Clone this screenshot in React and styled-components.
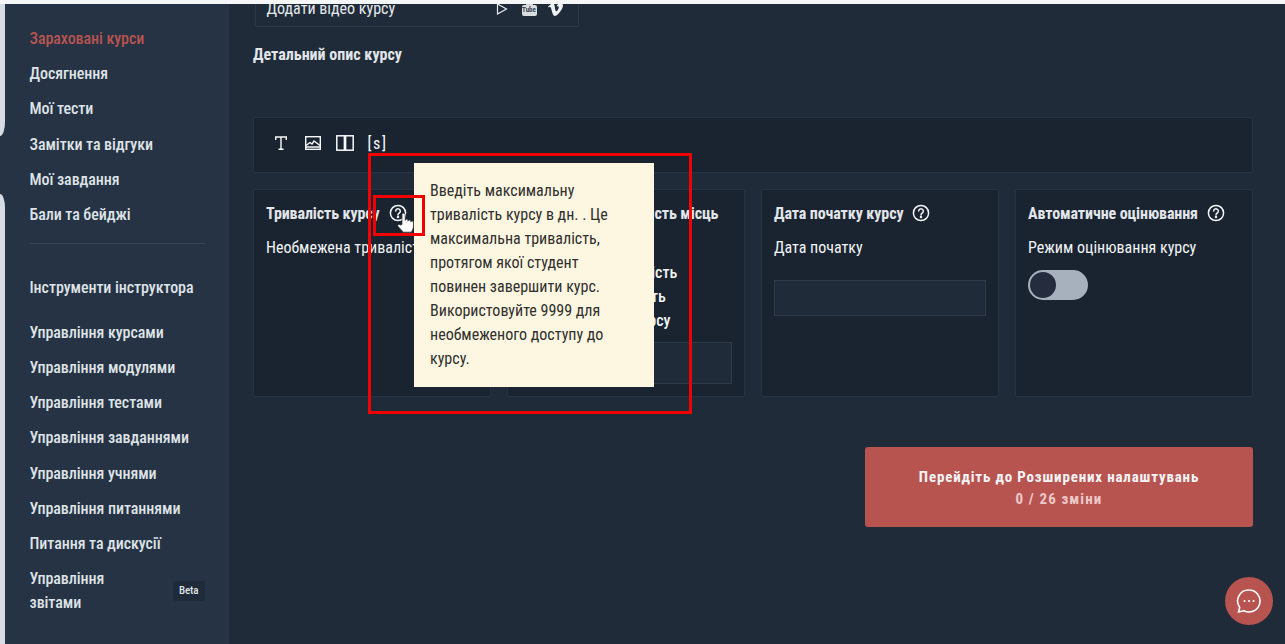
import React from 'react';
import styled, { createGlobalStyle } from 'styled-components';
import { FaVimeoV } from 'react-icons/fa';

const FONT = '"Roboto Condensed", Roboto, "Liberation Sans Narrow", "Liberation Sans", sans-serif';

const GlobalStyle = createGlobalStyle`
  html, body {
    margin: 0;
    padding: 0;
    height: 100%;
    overflow: hidden;
    background: #1f2b39;
  }
  * {
    box-sizing: border-box;
  }
`;

const Page = styled.div`
  display: flex;
  flex-direction: column;
  height: 644px;
  font-family: ${FONT};
  font-stretch: 75%;
  color: #f2f4f6;
`;

const TopStrip = styled.div`
  flex: 0 0 4px;
  background: #f4f6f8;
`;

const Body = styled.div`
  flex: 1;
  display: flex;
  min-height: 0;
`;

const EdgeStrip = styled.div`
  flex: 0 0 5px;
  display: flex;
  flex-direction: column;
  background: #263344;
`;

const EdgePiece = styled.div`
  background: #d5dce3;
  height: ${props => props.$h}px;
  flex: ${props => (props.$grow ? 1 : 'none')};
  margin-bottom: ${props => props.$gap || 0}px;
  border-radius: ${props => props.$radius || '0'};
`;

const Sidebar = styled.nav`
  flex: 0 0 223px;
  background: #263344;
  padding: 17px 24px 0 24.5px;
`;

const SideList = styled.div`
  display: flex;
  flex-direction: column;
`;

const SideItem = styled.div`
  display: flex;
  align-items: center;
  justify-content: space-between;
  height: ${props => props.$h || 35.2}px;
  font-size: 16px;
  font-weight: 500;
  letter-spacing: -0.07px;
  color: ${props => (props.$active ? '#b85450' : '#dfe3e7')};
`;

const TwoLine = styled.span`
  line-height: 24px;
  width: 90px;
`;

const BetaTag = styled.span`
  background: #1f2b39;
  border-radius: 3px;
  font-size: 11px;
  line-height: 20px;
  padding: 0 6px;
  color: #dfe3e7;
`;

const Divider = styled.div`
  height: 1px;
  background: #364558;
  margin: 11px 0 29px;
  width: 175px;
`;

const SideHeading = styled(SideItem)`
  height: 28px;
  margin-bottom: 13.7px;
`;

const LastItem = styled(SideItem)`
  margin-top: 0.3px;
`;

const Main = styled.main`
  position: relative;
  flex: 1;
  padding: 0 32px 0 24px;
  min-width: 0;
`;

const VideoBox = styled.div`
  width: 324px;
  height: 23px;
  margin-left: 2px;
  overflow: hidden;
  border: 1px solid #2a3848;
  border-top: 0;
  border-radius: 0 0 2px 2px;
  display: flex;
  align-items: flex-end;
  justify-content: space-between;
  padding: 0 14px 8px 11px;
  font-size: 16px;
  line-height: 18px;
  color: #e6e9ec;
`;

const VideoIcons = styled.div`
  display: flex;
  align-items: center;
  gap: 12px;
  height: 18px;
`;

const TubeBadge = styled.span`
  position: relative;
  width: 15px;
  height: 11px;
  margin: 3px -2px 0 2px;
  border-radius: 2px;
  background: #d9dde1;
  color: #3a4654;
  font-size: 7px;
  line-height: 11px;
  font-weight: 700;
  text-align: center;
  &::before {
    content: '';
    position: absolute;
    left: 4px;
    top: -3px;
    width: 7px;
    height: 3px;
    background: #c9ced4;
  }
`;

const SectionTitle = styled.h2`
  margin: 18px 0 0 0.5px;
  font-size: 16px;
  line-height: 20px;
  font-weight: 700;
  color: #e2e6ea;
`;

const Toolbar = styled.div`
  margin-top: 52px;
  height: 56px;
  display: flex;
  align-items: center;
  gap: 14px;
  padding: 0 18px 4px;
  background: #1a2430;
  border: 1px solid #263344;
  border-radius: 2px;
`;

const ToolGlyph = styled.span`
  font-size: 16px;
  font-weight: 400;
  letter-spacing: 1.6px;
  color: #f8f9fa;
`;

const Cards = styled.div`
  margin-top: 16px;
  display: grid;
  grid-template-columns: repeat(4, 238px);
  gap: 16px;
`;

const Card = styled.section`
  height: 208px;
  padding: 13px 12px;
  background: #1a2430;
  border: 1px solid #263344;
  border-radius: 2px;
`;

const CardHead = styled.div`
  display: flex;
  flex-wrap: wrap;
  align-items: center;
  column-gap: 9px;
  min-height: 20px;
  margin-top: 1px;
  padding-left: 0.5px;
  font-size: 16px;
  line-height: 20px;
  font-weight: 700;
  letter-spacing: -0.1px;
  color: #e2e6ea;
  white-space: nowrap;
`;

const HelpGlyph = styled.svg`
  margin-top: -3px;
`;

const CardLabel = styled.div`
  margin-top: 14px;
  padding-left: 0.5px;
  font-size: 16px;
  line-height: 20px;
  color: #f2f4f6;
  white-space: nowrap;
`;

const FieldBox = styled.div`
  margin-top: ${props => props.$mt || 22}px;
  height: ${props => props.$h || 36}px;
  background: #1f2b39;
  border: 1px solid #2c3a4a;
`;

const StackLabel = styled.div`
  margin-top: 22px;
  font-size: 16px;
  line-height: 24px;
  font-weight: 500;
  white-space: nowrap;
`;

const Toggle = styled.div`
  margin-top: 12px;
  width: 60px;
  height: 30px;
  border-radius: 15px;
  background: #a7b0bd;
  padding: 2px;
`;

const ToggleKnob = styled.div`
  width: 26px;
  height: 26px;
  border-radius: 50%;
  background: #252c3e;
`;

const Tooltip = styled.div`
  position: absolute;
  left: 185px;
  top: 159px;
  width: 240px;
  height: 224px;
  padding: 16px 16px 16px 16.5px;
  background: #fdf6e0;
  color: #30302e;
  font-size: 16px;
  line-height: 24px;
`;

const Highlight = styled.div`
  position: absolute;
  border: 3px solid #f00000;
  pointer-events: none;
  left: ${props => props.$l}px;
  top: ${props => props.$t}px;
  width: ${props => props.$w}px;
  height: ${props => props.$h}px;
`;

const Cursor = styled.svg`
  position: absolute;
  left: 168px;
  top: 208px;
`;

const Footer = styled.div`
  display: flex;
  justify-content: flex-end;
  margin-top: 50px;
`;

const NextButton = styled.div`
  width: 388px;
  height: 80px;
  padding-top: 2px;
  background: #b85450;
  border-radius: 3px;
  display: flex;
  flex-direction: column;
  align-items: center;
  justify-content: center;
  gap: 2px;
  font-size: 15px;
  line-height: 20px;
  font-weight: 700;
  letter-spacing: 0.82px;
`;

const ButtonSub = styled.span`
  color: #ecc9c8;
  letter-spacing: 1.1px;
`;

const ChatBubble = styled.div`
  position: absolute;
  right: 12px;
  bottom: 19px;
  width: 48px;
  height: 48px;
  border-radius: 50%;
  background: #b85450;
  display: flex;
  align-items: center;
  justify-content: center;
`;

const HelpIcon = () => (
  <HelpGlyph width="18" height="18" viewBox="0 0 18 18" fill="none" stroke="#f2f4f6" strokeWidth="1.5">
    <circle cx="9" cy="9" r="7.6" />
    <path d="M6.7 7.1a2.3 2.3 0 1 1 3.6 1.9c-.8.5-1.3 1-1.3 1.9" strokeLinecap="round" />
    <circle cx="9" cy="13" r=".5" fill="#f2f4f6" />
  </HelpGlyph>
);

const studentItems = ['Зараховані курси', 'Досягнення', 'Мої тести', 'Замітки та відгуки', 'Мої завдання', 'Бали та бейджі'];
const instructorItems = ['Управління курсами', 'Управління модулями', 'Управління тестами', 'Управління завданнями', 'Управління учнями', 'Управління питаннями', 'Питання та дискусії'];

export default function App() {
  return (
    <Page>
      <GlobalStyle />
      <TopStrip />
      <Body>
        <EdgeStrip>
          <EdgePiece $h={132} $radius="0 0 5px 0 / 0 0 14px 0" $gap={58} />
          <EdgePiece $grow $radius="0 5px 0 0 / 0 14px 0 0" />
        </EdgeStrip>
        <Sidebar>
          <SideList>
            {studentItems.map((item, i) => (
              <SideItem key={item} $active={i === 0}>{item}</SideItem>
            ))}
            <Divider />
            <SideHeading>Інструменти інструктора</SideHeading>
            {instructorItems.map(item => (
              <SideItem key={item}>{item}</SideItem>
            ))}
            <LastItem $h={60}>
              <TwoLine>Управління звітами</TwoLine>
              <BetaTag>Beta</BetaTag>
            </LastItem>
          </SideList>
        </Sidebar>
        <Main>
          <VideoBox>
            Додати відео курсу
            <VideoIcons>
              <svg width="12" height="12" viewBox="0 0 12 12" fill="none" stroke="#e6e9ec" strokeWidth="1.2"><path d="M1.5 1v10l9-5z" /></svg>
              <TubeBadge>Tube</TubeBadge>
              <FaVimeoV size={17} color="#eef0f2" />
            </VideoIcons>
          </VideoBox>
          <SectionTitle>Детальний опис курсу</SectionTitle>
          <Toolbar>
            <svg width="18" height="16" viewBox="0 0 18 16" fill="none" stroke="#f8f9fa" strokeWidth="1.4"><path d="M3.7 5V2h10.6v3M9 2v12M6.5 14.3h5" /></svg>
            <svg width="18" height="16" viewBox="0 0 18 16" fill="none" stroke="#f8f9fa" strokeWidth="1.4"><rect x="1.7" y="1.7" width="14.6" height="12.6" /><path d="M2 10.5l4-3 2 1.5 2-3 6 4.5M2 12h14" /></svg>
            <svg width="18" height="16" viewBox="0 0 18 16" fill="none" stroke="#f8f9fa" strokeWidth="1.5"><rect x=".8" y=".8" width="7.6" height="14.4" /><rect x="9.6" y=".8" width="7.6" height="14.4" /></svg>
            <ToolGlyph>[s]</ToolGlyph>
          </Toolbar>
          <Cards>
            <Card>
              <CardHead>Тривалість курсу <HelpIcon /></CardHead>
              <CardLabel>Необмежена тривалість</CardLabel>
            </Card>
            <Card>
              <CardHead>Максимальна кількість місць <HelpIcon /></CardHead>
              <StackLabel>Максимальна кількість<br />студентів, які можуть<br />записуватися на курсу</StackLabel>
              <FieldBox $mt={9} $h={42} />
            </Card>
            <Card>
              <CardHead>Дата початку курсу <HelpIcon /></CardHead>
              <CardLabel>Дата початку</CardLabel>
              <FieldBox />
            </Card>
            <Card>
              <CardHead>Автоматичне оцінювання <HelpIcon /></CardHead>
              <CardLabel>Режим оцінювання курсу</CardLabel>
              <Toggle><ToggleKnob /></Toggle>
            </Card>
          </Cards>
          <Footer>
            <NextButton>
              Перейдіть до Розширених налаштувань
              <ButtonSub>0 / 26 зміни</ButtonSub>
            </NextButton>
          </Footer>
          <Tooltip>
            Введіть максимальну тривалість курсу в дн. . Це максимальна тривалість, протягом якої студент повинен завершити курс. Використовуйте 9999 для необмеженого доступу до курсу.
          </Tooltip>
          <Highlight $l={139} $t={149} $w={324} $h={261} />
          <Highlight $l={144} $t={191} $w={52} $h={41} />
          <Cursor width="17" height="21" viewBox="0 0 17 25" preserveAspectRatio="none" fill="#fff" stroke="#333" strokeWidth=".8">
            <path d="M5 12V3a1.6 1.6 0 0 1 3.2 0v7a1.4 1.4 0 0 1 2.8 0v1a1.4 1.4 0 0 1 2.8 0v1a1.3 1.3 0 0 1 2.6 0v5c0 3-1.2 5-2 7H6c-1-2-3-4-5-7-1-2 1-3 2.5-1.5L5 15z" />
          </Cursor>
          <ChatBubble>
            <svg width="26" height="26" viewBox="0 0 26 26" fill="none" stroke="#fff" strokeWidth="1.6"><path d="M13 2a11 11 0 1 1-5 20.8L2.5 24l1.2-4.6A11 11 0 0 1 13 2z" /><path d="M8.5 13h.1M13 13h.1M17.5 13h.1" strokeWidth="2" strokeLinecap="round" /></svg>
          </ChatBubble>
        </Main>
      </Body>
    </Page>
  );
}
